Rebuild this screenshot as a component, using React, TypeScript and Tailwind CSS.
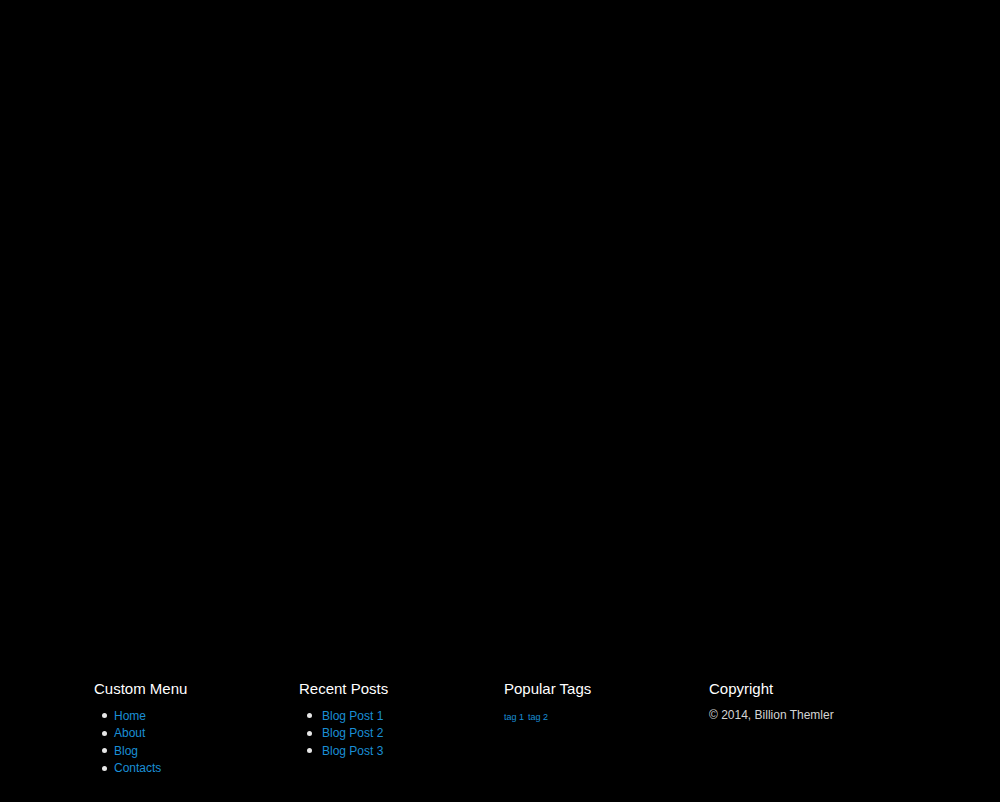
import React from "react";

const menu = ["Home", "About", "Blog", "Contacts"];
const posts = ["Blog Post 1", "Blog Post 2", "Blog Post 3"];

function Bullet({ text, gap }: { text: string; gap: string }) {
    return (
        <li className="flex items-center h-[17.5px]">
            <span className="w-[5px] h-[5px] rounded-full bg-[#e6e6e6] shrink-0" />
            <a href="#" className={`text-[#1a8fd6] ${gap}`}>{text}</a>
        </li>
    );
}

export default function App() {
    return (
        <div className="min-h-[802px] bg-black flex flex-col" style={{ fontFamily: '"Liberation Sans", Arial, sans-serif' }}>
            <main className="h-[679px]" />
            <footer className="pl-[94px] pb-[24px] grid grid-cols-[205px_205px_205px_205px]">
                <div>
                    <h3 className="text-white text-[15px] leading-[19px]">Custom Menu</h3>
                    <ul className="mt-[9px] pl-[8px] text-[12px]">
                        {menu.map((m) => (
                            <Bullet key={m} text={m} gap="ml-[7px]" />
                        ))}
                    </ul>
                </div>
                <div>
                    <h3 className="text-white text-[15px] leading-[19px]">Recent Posts</h3>
                    <ul className="mt-[9px] pl-[8px] text-[12px]">
                        {posts.map((p) => (
                            <Bullet key={p} text={p} gap="ml-[10px]" />
                        ))}
                    </ul>
                </div>
                <div>
                    <h3 className="text-white text-[15px] leading-[19px]">Popular Tags</h3>
                    <div className="mt-[14px] text-[9px] leading-[11px] flex gap-[4px]">
                        <a href="#" className="text-[#1a8fd6]">tag 1</a>
                        <a href="#" className="text-[#1a8fd6]">tag 2</a>
                    </div>
                </div>
                <div>
                    <h3 className="text-white text-[15px] leading-[19px]">Copyright</h3>
                    <p className="mt-[9px] text-[12px] leading-[17.5px] text-[#d4d4d4]">© 2014, Billion Themler</p>
                </div>
            </footer>
        </div>
    );
}
